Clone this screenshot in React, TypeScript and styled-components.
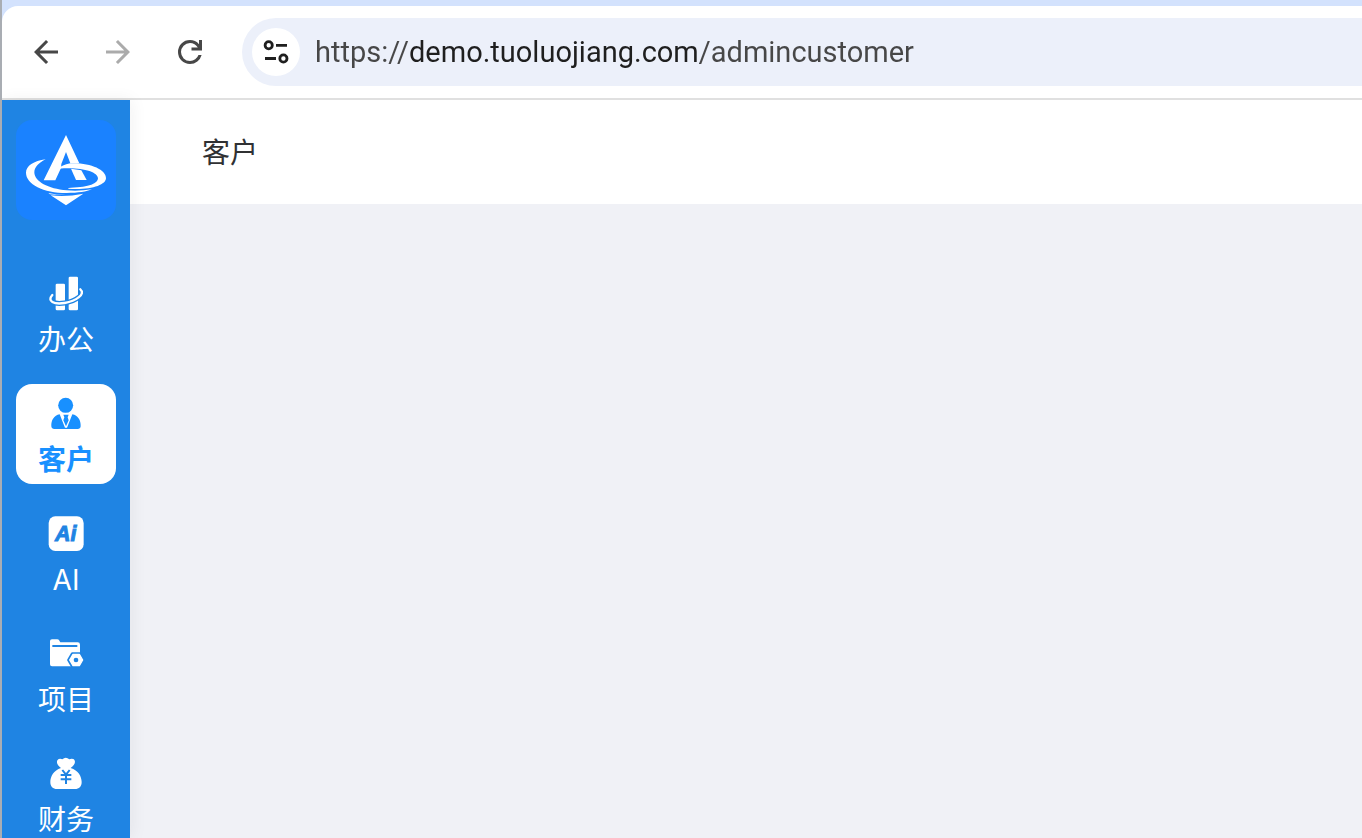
import React from "react";
import styled, { createGlobalStyle } from "styled-components";

const BLUE = "#1f84e3";
const ACTIVE = "#1890ff";

const GlobalStyle = createGlobalStyle`
  *, *::before, *::after { box-sizing: border-box; }
  body {
    margin: 0;
    background: #ffffff;
    font-family: Inter, "Noto Sans CJK SC", sans-serif;
  }
`;

const Window = styled.div`
  display: flex;
  flex-direction: column;
  height: 100vh;
  overflow: hidden;
  border-left: 2px solid #a9adb3;
`;

const TabStrip = styled.div`
  flex: none;
  padding-top: 6px;
  background: #d3e2fd;
`;

const Toolbar = styled.div`
  display: flex;
  align-items: center;
  gap: 36px;
  padding: 12px 0 12px 26px;
  background: #ffffff;
  border-bottom: 2px solid #e0e0e0;
  border-top-left-radius: 16px;
`;

const ToolButton = styled.button`
  display: flex;
  padding: 0;
  border: 0;
  background: none;
  color: #474747;

  &:disabled {
    color: #ababab;
  }
`;

const AddressBar = styled.div`
  flex: 1;
  display: flex;
  align-items: center;
  gap: 15px;
  min-width: 0;
  height: 68px;
  padding-left: 10px;
  margin-left: -2px;
  border-radius: 34px 0 0 34px;
  background: #ecf0fa;
`;

const SiteInfo = styled.button`
  display: flex;
  align-items: center;
  justify-content: center;
  flex: none;
  width: 48px;
  height: 48px;
  padding: 0;
  border: 0;
  border-radius: 50%;
  background: #ffffff;
  color: #1f1f1f;
`;

/* The host part of the address is darker than the scheme and the path. */
const AddressInput = styled.input`
  flex: 1;
  min-width: 0;
  height: 40px;
  padding: 0;
  border: 0;
  outline: 0;
  font-family: Roboto, sans-serif;
  font-size: 29px;
  line-height: 40px;
  color: #1f1f1f;
  background: linear-gradient(90deg, #474747 94px, #1f1f1f 94px, #1f1f1f 385px, #474747 385px);
  background-clip: text;
  -webkit-background-clip: text;
  -webkit-text-fill-color: transparent;
`;

const Page = styled.div`
  flex: 1;
  display: flex;
  min-height: 0;
`;

const Sidebar = styled.aside`
  position: relative;
  z-index: 1;
  flex: none;
  padding: 20px 14px;
  background: ${BLUE};
  box-shadow: 2px 0 16px rgba(29, 35, 41, 0.06);
`;

const Brand = styled.a`
  display: block;
  width: 100px;
  height: 100px;
  margin-bottom: 44px;
  border-radius: 16px;
  background: #1a82ff;
`;

const Menu = styled.nav`
  display: flex;
  flex-direction: column;
  gap: 20px;
`;

const MenuItem = styled.a<{ $active?: boolean }>`
  display: flex;
  flex-direction: column;
  align-items: center;
  gap: 8px;
  width: 100px;
  height: 100px;
  padding-top: 12px;
  border-radius: 16px;
  font-size: 28px;
  line-height: 40px;
  font-weight: ${(p) => (p.$active ? 600 : 400)};
  text-decoration: none;
  color: ${(p) => (p.$active ? ACTIVE : "#ffffff")};
  background: ${(p) => (p.$active ? "#ffffff" : "transparent")};
`;

const Content = styled.main`
  flex: 1;
  min-width: 0;
  background: #f0f1f6;
`;

const Header = styled.header`
  display: flex;
  align-items: center;
  height: 104px;
  padding: 2px 72px 0;
  background: #ffffff;
`;

const Title = styled.h1`
  margin: 0;
  font-size: 28px;
  line-height: 40px;
  font-weight: 400;
  color: #303133;
`;

const ToolIcon = ({ d }: { d: string }) => (
  <svg width="36" height="36" viewBox="0 0 24 24" fill="currentColor" aria-hidden="true">
    <path d={d} />
  </svg>
);

const TuneIcon = () => (
  <svg width="28" height="28" viewBox="0 0 28 28" fill="none" stroke="currentColor" strokeWidth="2.800" aria-hidden="true">
    <circle cx="6.700" cy="7.300" r="3.600" />
    <path d="M14 7.300H25M3 20.500H14" />
    <circle cx="21.400" cy="20.500" r="3.600" />
  </svg>
);

const BrandLogo = () => (
  <svg width="100" height="100" viewBox="48 60 300 300" fill="#fff" aria-hidden="true">
    <path d="M198 105L131 241H166L183 204L184 192L198 156L211 190L238 190Z" />
    <path d="M213 206L244 211L260 240H228Z" />
    <path d="M177 206Q184 195 211 190C268 187 318 208 318 234C318 256 270 271 204 266Q204 263 213 263C268 262 294 250 294 235C294 214 240 200 177 206Z" />
    <path d="M137 178C101 183 78 198 78 218C78 252 130 279 200 279C235 279 260 275 276 268C250 272 225 273 200 271C145 267 103 244 103 217C103 201 117 188 137 178Z" />
    <path d="M145 279Q170 285 198 285Q172 286 150 283Z" />
    <path d="M152 286Q198 292 250 281L198 316Z" />
  </svg>
);

/* Menu drawings share one 108-unit grid, three units to a pixel. */
const MenuSvg = ({ children }: { children: React.ReactNode }) => (
  <svg width="36" height="36" viewBox="144 0 108 108" fill="currentColor" aria-hidden="true">
    {children}
  </svg>
);

const OfficeIcon = () => (
  <MenuSvg>
    <rect x="167" y="23" width="28" height="80" rx="4" />
    <rect x="206" y="2" width="28" height="101" rx="4" />
    <path d="M157 57C140 76 162 86 194 81C228 75 258 54 241 40" fill="none" stroke={BLUE} strokeWidth="15" />
    <path d="M157 57C140 76 162 86 194 81C228 75 258 54 241 40" fill="none" stroke="currentColor" strokeWidth="7" strokeLinecap="round" />
  </MenuSvg>
);

const CustomerIcon = () => (
  <MenuSvg>
    <circle cx="197" cy="28" r="22.500" />
    <path d="M179 55C162 58 153 73 154 91Q155 99 163 99H233Q241 99 242 91C243 73 234 58 217 55L201 95H195Z" />
    <path d="M190 56H206L203 64L206 73L198 91L190 73L193 64Z" />
  </MenuSvg>
);

const AiIcon = () => (
  <MenuSvg>
    <rect x="146" y="1" width="105" height="104" rx="20" />
    <text x="165" y="75" fill={BLUE} stroke={BLUE} strokeWidth="3" fontFamily="Liberation Sans, sans-serif" fontSize="64" fontWeight="700" fontStyle="italic">
      Ai
    </text>
  </MenuSvg>
);

const ProjectIcon = () => (
  <MenuSvg>
    <path d="M150 15Q150 10 156 10H172Q177 10 180 17L181 19H233Q240 19 240 26V91H156Q150 91 150 85Z" />
    <path d="M157 30H232" stroke={BLUE} strokeWidth="6" />
    <path d="M217 53H240L251 72L240 91H217L206 72Z" fill={BLUE} stroke={BLUE} strokeWidth="9" strokeLinejoin="round" />
    <path d="M219 55H238L248 72L238 89H219L209 72Z" stroke="currentColor" strokeWidth="4" strokeLinejoin="round" />
    <circle cx="228" cy="72" r="7" fill={BLUE} />
  </MenuSvg>
);

const FinanceIcon = () => (
  <MenuSvg>
    <path d="M183 36C170 27 167 15 176 9Q182 7 187 10Q197 1 208 10Q213 7 220 9C229 15 225 27 212 36C235 43 245 62 245 78C245 92 237 99 225 99H171C159 99 151 92 151 78C151 62 161 43 183 36Z" />
    <path d="M187 42L198 56L209 42M198 56V84M182 57H214M182 70H214" fill="none" stroke={BLUE} strokeWidth="6" />
  </MenuSvg>
);

const MENU = [
  { label: "办公", icon: <OfficeIcon /> },
  { label: "客户", icon: <CustomerIcon />, active: true },
  { label: "AI", icon: <AiIcon /> },
  { label: "项目", icon: <ProjectIcon /> },
  { label: "财务", icon: <FinanceIcon /> },
];

export default function App() {
  return (
    <>
      <GlobalStyle />
      <Window>
        <TabStrip>
          <Toolbar>
            <ToolButton type="button" aria-label="Back">
              <ToolIcon d="M7.83 13l5.59 5.59L12 20l-8-8 8-8 1.420 1.410L7.830 11H20v2z" />
            </ToolButton>
            <ToolButton type="button" aria-label="Forward" disabled>
              <ToolIcon d="M16.170 13H4v-2h12.170l-5.590-5.590L12 4l8 8-8 8-1.420-1.410z" />
            </ToolButton>
            <ToolButton type="button" aria-label="Reload">
              <ToolIcon d="M12 20q-3.350 0-5.675-2.325T4 12t2.325-5.675T12 4q1.725 0 3.300.712T18 6.750V4h2v7h-7V9h4.200q-.8-1.400-2.187-2.200T12 6Q9.500 6 7.750 7.750T6 12t1.750 4.250T12 18q1.925 0 3.475-1.100T17.650 14h2.100q-.7 2.650-2.850 4.325T12 20" />
            </ToolButton>
            <AddressBar>
              <SiteInfo type="button" aria-label="Site information">
                <TuneIcon />
              </SiteInfo>
              <AddressInput
                type="text"
                aria-label="Address"
                defaultValue="https://demo.tuoluojiang.com/admincustomer"
                spellCheck={false}
              />
            </AddressBar>
          </Toolbar>
        </TabStrip>
        <Page>
          <Sidebar>
            <Brand href="#" aria-label="Home">
              <BrandLogo />
            </Brand>
            <Menu>
              {MENU.map((item) => (
                <MenuItem
                  key={item.label}
                  href="#"
                  $active={item.active}
                  aria-current={item.active ? "page" : undefined}
                >
                  {item.icon}
                  <span>{item.label}</span>
                </MenuItem>
              ))}
            </Menu>
          </Sidebar>
          <Content>
            <Header>
              <Title>客户</Title>
            </Header>
          </Content>
        </Page>
      </Window>
    </>
  );
}
